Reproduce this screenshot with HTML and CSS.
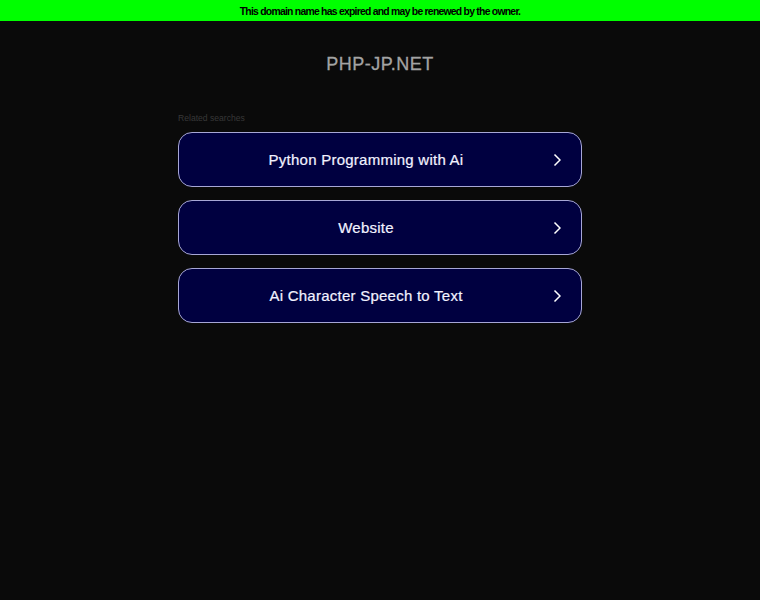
FILE: index.html
```html
<!DOCTYPE html>
<html lang="en">
<head>
<meta charset="utf-8">
<title>php-jp.net</title>
<link rel="stylesheet" href="styles.css">
</head>
<body>
<div class="banner">This domain name has expired and may be renewed by the owner.</div>
<main class="main">
  <h1 class="domain">PHP-JP.NET</h1>
  <section class="related">
    <div class="related-title">Related searches</div>
    <a class="link" href="#"><span class="link-text">Python Programming with Ai</span><svg class="chev" viewBox="0 0 8 14" width="8" height="14"><path d="M1.5 1.5 L7 7 L1.5 12.5" fill="none" stroke="#fff" stroke-width="1.5"/></svg></a>
    <a class="link" href="#"><span class="link-text">Website</span><svg class="chev" viewBox="0 0 8 14" width="8" height="14"><path d="M1.5 1.5 L7 7 L1.5 12.5" fill="none" stroke="#fff" stroke-width="1.5"/></svg></a>
    <a class="link" href="#"><span class="link-text">Ai Character Speech to Text</span><svg class="chev" viewBox="0 0 8 14" width="8" height="14"><path d="M1.5 1.5 L7 7 L1.5 12.5" fill="none" stroke="#fff" stroke-width="1.5"/></svg></a>
  </section>
</main>
</body>
</html>
```

FILE: styles.css
```css
html, body {
  margin: 0;
  padding: 0;
  background: #0a0a0a;
  font-family: "Liberation Sans", Arial, sans-serif;
  height: 100%;
}
.banner {
  background: #00ff00;
  color: #000;
  font-weight: bold;
  font-size: 10.4px;
  letter-spacing: -0.75px;
  height: 21px;
  line-height: 23px;
  text-align: center;
}
.main {
  width: 404px;
  margin: 0 auto;
}
.domain {
  margin: 0;
  padding-top: 32px;
  height: 59px;
  box-sizing: content-box;
  font-size: 18px;
  font-weight: normal;
  line-height: 22px;
  letter-spacing: 0.5px;
  text-align: center;
  color: #a3a3a3;
  -webkit-text-stroke: 0.3px #a3a3a3;
}
.related-title {
  font-size: 8.6px;
  color: #383838;
  line-height: 12px;
  margin-bottom: 8px;
}
.link {
  display: flex;
  align-items: center;
  justify-content: center;
  position: relative;
  height: 53px;
  margin-bottom: 13px;
  border: 1px solid #a7a7d6;
  border-radius: 14px;
  background: #000040;
  color: #f2f2ff;
  text-decoration: none;
  font-size: 15px;
  letter-spacing: 0.25px;
  -webkit-text-stroke: 0.2px #f2f2ff;
}
.link-text {
  padding-right: 28px;
}
.chev {
  position: absolute;
  right: 20px;
  top: 20px;
}
```
